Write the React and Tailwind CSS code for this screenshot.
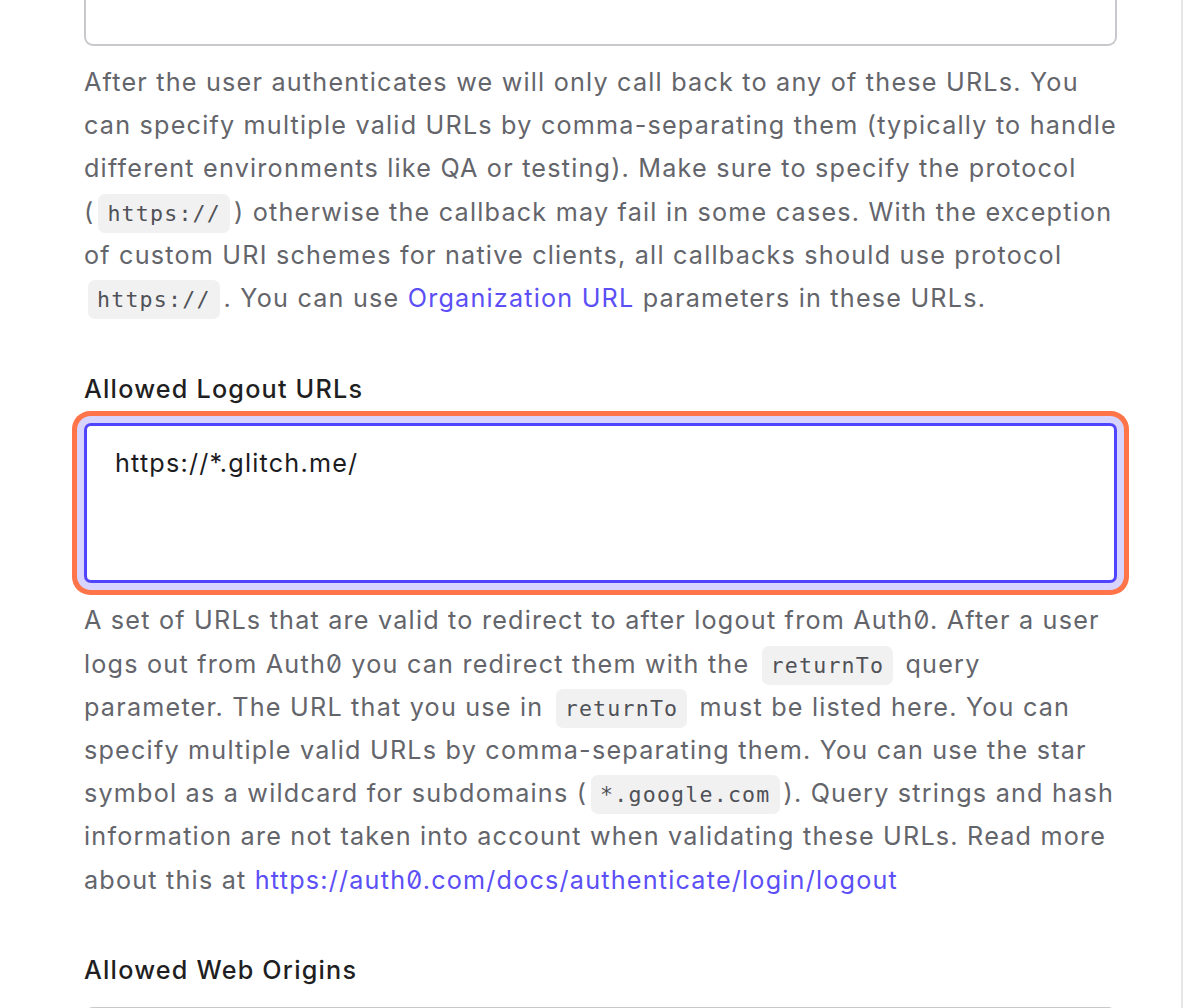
import React from "react";

function Code({ children }) {
  return (
    <code className="mx-[4px] rounded-[7px] bg-[#f1f1f2] px-[9px] py-[7px] font-['DejaVu_Sans_Mono',monospace] text-[21.6px] leading-none tracking-[1.2px] text-[#505157]">
      {children}
    </code>
  );
}

function Link({ children }) {
  return <span className="text-[#5b4ff5]">{children}</span>;
}

export default function App() {
  return (
    <div className="h-[1008px] w-[1200px] overflow-hidden bg-white font-['Inter','Liberation_Sans',sans-serif] tracking-[1.2px] slashed-zero">
      <div className="h-full w-[1183px] border-r-2 border-[#e6e6e8] pl-[84px] pr-[64px]">
        <div className="h-[46px] rounded-b-[9px] border-x-2 border-b-2 border-[#c9c9cd]" />

        <p className="mt-[15px] text-[25.2px] leading-[43.2px] text-[#64656b]">
          After the user authenticates we will only call back to any of these URLs. You can specify multiple valid URLs by comma-separating them (typically to handle different environments like QA or testing). Make sure to specify the protocol (<Code>https://</Code>) otherwise the callback may fail in some cases. With the exception of custom URI schemes for native clients, all callbacks should use protocol <Code>https://</Code>. You can use <Link>Organization URL</Link> parameters in these URLs.
        </p>

        <div className="mt-[48px] text-[25.2px] font-medium leading-[43.2px] text-[#1f1f23]">
          Allowed Logout URLs
        </div>

        <div className="mt-[12px] h-[160px] rounded-[7px] border-[3px] border-[#4f45ff] pl-[28px] pt-[16px] text-[25.2px] leading-[43.2px] text-[#1c1c1f] shadow-[0_0_0_7px_#d7d5ff,0_0_0_12px_#ff7448]">
          https://*.glitch.me/
        </div>

        <p className="mt-[16px] text-[25.2px] leading-[43.2px] text-[#64656b]">
          A set of URLs that are valid to redirect to after logout from Auth0. After a user logs out from Auth0 you can redirect them with the <Code>returnTo</Code> query parameter. The URL that you use in <Code>returnTo</Code> must be listed here. You can specify multiple valid URLs by comma-separating them. You can use the star symbol as a wildcard for subdomains (<Code>*.google.com</Code>). Query strings and hash information are not taken into account when validating these URLs. Read more about this at <Link>https://auth0.com/docs/authenticate/login/logout</Link>
        </p>

        <div className="mt-[47px] text-[25.2px] font-medium leading-[43.2px] text-[#1f1f23]">
          Allowed Web Origins
        </div>

        <div className="mt-[15px] h-[80px] rounded-[9px] border-2 border-[#c9c9cd]" />
      </div>
    </div>
  );
}
